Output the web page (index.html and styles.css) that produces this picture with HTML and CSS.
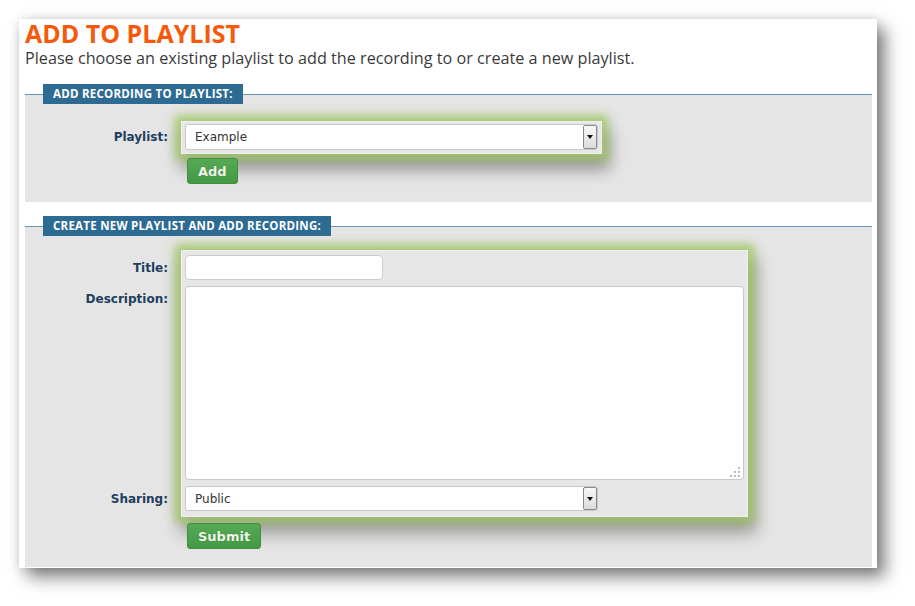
FILE: index.html
```html
<!DOCTYPE html>
<html lang="en">

<head>
    <meta charset="UTF-8" />
    <title>Add to Playlist</title>
    <link rel="stylesheet" href="styles.css">
</head>

<body>
    <div class="panel">
        <h1>ADD TO PLAYLIST</h1>
        <p class="intro">Please choose an existing playlist to add the recording to or create a new playlist.</p>

        <form action="#" method="post" class="box first">
            <fieldset>
                <legend>Add recording to playlist:</legend>
                <div class="fields one">
                    <div class="glow g1"></div>
                    <label class="lbl l1" for="playlist">Playlist:</label>
                    <div class="pick p1">
                        <select id="playlist" name="playlist">
                            <option>Example</option>
                        </select>
                        <span class="arrow"></span>
                    </div>
                    <div class="actions">
                        <input type="submit" value="Add" class="btn" />
                    </div>
                </div>
            </fieldset>
        </form>

        <form action="#" method="post" class="box second">
            <fieldset>
                <legend>Create new playlist and add recording:</legend>
                <div class="fields two">
                    <div class="glow g2"></div>
                    <label class="lbl l1" for="title">Title:</label>
                    <input type="text" id="title" name="title" class="title r1" />
                    <label class="lbl l2" for="desc">Description:</label>
                    <div class="area r2">
                        <textarea id="desc" name="desc"></textarea>
                        <svg class="grip" width="10" height="10" viewBox="0 0 10 10">
                            <rect x="8" y="0" width="2" height="2" fill="#bbb" />
                            <rect x="4" y="4" width="2" height="2" fill="#bbb" />
                            <rect x="8" y="4" width="2" height="2" fill="#bbb" />
                            <rect x="0" y="8" width="2" height="2" fill="#bbb" />
                            <rect x="4" y="8" width="2" height="2" fill="#bbb" />
                            <rect x="8" y="8" width="2" height="2" fill="#bbb" />
                        </svg>
                    </div>
                    <label class="lbl l3" for="sharing">Sharing:</label>
                    <div class="pick r3">
                        <select id="sharing" name="sharing">
                            <option>Public</option>
                            <option>Private</option>
                        </select>
                        <span class="arrow"></span>
                    </div>
                    <div class="actions r4">
                        <input type="submit" value="Submit" class="btn" />
                    </div>
                </div>
            </fieldset>
        </form>
    </div>
</body>

</html>
```

FILE: styles.css
```css
html {
    background: white;
}

body {
    margin: 0;
    padding: 19px 0 38px 19px;
    min-height: 606px;
    box-sizing: border-box;
    background: white;
    font-family: "Open Sans", Arial, sans-serif;
}

.panel {
    width: 858px;
    height: 549px;
    box-sizing: border-box;
    padding: 0 5px 0 6px;
    background: white;
    box-shadow: 8px 9px 16px rgba(0, 0, 0, 0.5), 0 0 9px rgba(0, 0, 0, 0.12);
}

h1 {
    margin: 0;
    padding-top: 1px;
    font-size: 25px;
    line-height: 26px;
    font-weight: 700;
    color: #f55a0c;
}

.intro {
    margin: 2px 0 0;
    font-size: 16.2px;
    line-height: 20px;
    color: #3a3a3a;
}

.box {
    margin: 0;
}

.first {
    margin-top: 16px;
}

.second {
    margin-top: 14px;
}

fieldset {
    margin: 0;
    padding: 0 0 18px 0;
    border: none;
    border-top: 1px solid #6a93b3;
    background: #e5e5e5;
}

legend {
    margin-left: 18px;
    padding: 0 10px;
    height: 20px;
    line-height: 20px;
    background: #2e6b93;
    color: white;
    font-size: 11.5px;
    font-weight: 700;
    text-transform: uppercase;
    letter-spacing: 0.25px;
}

.fields {
    display: grid;
    grid-template-columns: 143px max-content;
    column-gap: 13px;
}

.one {
    margin-top: 17px;
    row-gap: 4px;
}

.two {
    margin-top: 14px;
    row-gap: 6px;
}

.glow {
    grid-column: 2;
    background: #e7e7e7;
    border: 1px solid #f0f0f0;
    box-sizing: border-box;
    box-shadow: 0 0 9px 6px rgba(160, 200, 100, 0.85), 4px 12px 16px 4px rgba(0, 0, 0, 0.34);
}

.g1 {
    grid-row: 1;
}

.g2 {
    grid-row: 1 / 4;
}

.lbl {
    grid-column: 1;
    text-align: right;
    font-family: "DejaVu Sans", Verdana, sans-serif;
    font-size: 12px;
    font-weight: 700;
    line-height: 16px;
    color: #1e3e5e;
    padding-top: 5px;
}

.l1 {
    grid-row: 1;
}

.one .l1 {
    padding-top: 8px;
}

.two .l1 {
    padding-top: 10px;
}

.l2 {
    grid-row: 2;
}

.l3 {
    grid-row: 3;
}

.pick {
    grid-column: 2;
    position: relative;
    margin: 0 4px;
    width: 413px;
}

.p1 {
    grid-row: 1;
    margin-top: 3px;
    margin-bottom: 4px;
}

.r1 {
    grid-row: 1;
    grid-column: 2;
    margin: 5px 4px 0;
}

.r2 {
    grid-row: 2;
    grid-column: 2;
    margin: 0 4px;
}

.r3 {
    grid-row: 3;
    margin-bottom: 6px;
}

select {
    display: block;
    width: 100%;
    height: 26px;
    padding: 0 9px;
    border: 1px solid #c8c8c8;
    border-radius: 3px;
    background: white;
    font-family: "DejaVu Sans", Verdana, sans-serif;
    font-size: 12px;
    color: #333;
    appearance: none;
    -webkit-appearance: none;
    box-sizing: border-box;
}

.r3 select {
    height: 25px;
}

.arrow {
    position: absolute;
    right: 1px;
    top: 1px;
    bottom: 1px;
    width: 14px;
    box-sizing: border-box;
    border: 1px solid #8a8a8a;
    border-radius: 2px;
    background: linear-gradient(#f8f8f8, #dcdcdc);
}

.arrow::after {
    content: "";
    position: absolute;
    left: 3px;
    top: 50%;
    margin-top: -2px;
    border-left: 3px solid transparent;
    border-right: 3px solid transparent;
    border-top: 4px solid #111;
}

.title {
    width: 198px;
    height: 25px;
    padding: 0 8px;
    border: 1px solid #cccccc;
    border-radius: 4px;
    background: white;
    box-sizing: border-box;
}

.area {
    position: relative;
    width: 559px;
    height: 194px;
}

textarea {
    display: block;
    width: 100%;
    height: 100%;
    border: 1px solid #c8c8c8;
    border-radius: 4px;
    background: white;
    box-sizing: border-box;
    resize: none;
}

.grip {
    position: absolute;
    right: 4px;
    bottom: 3px;
}

.actions {
    grid-column: 2;
    padding-left: 6px;
}

.r4 {
    grid-row: 4;
}

.btn {
    height: 26px;
    padding: 0 10px;
    border: 1px solid #3f8f3f;
    border-radius: 3px;
    background: linear-gradient(#55a955, #449944);
    color: #eef5ea;
    font-family: "DejaVu Sans", Verdana, sans-serif;
    font-size: 13px;
    font-weight: 700;
    text-shadow: 0 0 1px rgba(0, 0, 0, 0.3);
    cursor: pointer;
}
```
